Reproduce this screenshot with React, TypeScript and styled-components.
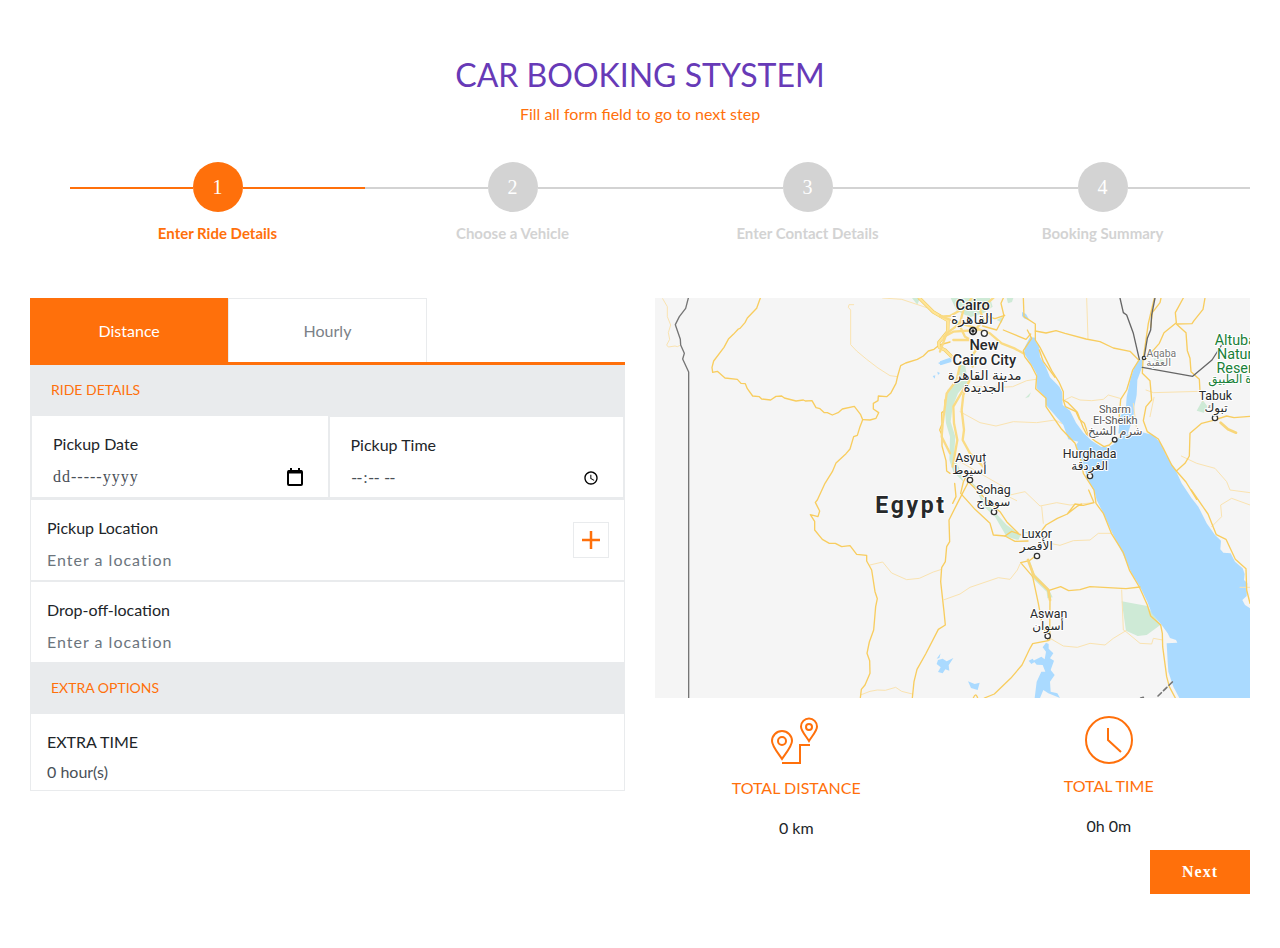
import React, { useState } from "react";
import styled, { createGlobalStyle } from "styled-components";

const orange = "#ff700b";
const rule = "#e9ebed";
const sans = `Lato, "Liberation Sans", sans-serif`;
const serif = `"Liberation Serif", "Times New Roman", serif`;

const GlobalStyle = createGlobalStyle`
  *, *::before, *::after { box-sizing: border-box; }
  body { margin: 0; background: #fff; color: #212529; font: 16px/24px ${sans}; }
  h1, h2, h3, p, ol, dl, dd, dt { margin: 0; padding: 0; }
`;

const Page = styled.main`
  padding: 55px 30px;
`;

const Header = styled.header`
  text-align: center;
  color: ${orange};
`;

const Title = styled.h1`
  color: #673ab7;
  font-size: 32px;
  line-height: 40px;
  font-weight: 400;
  margin-bottom: 7px;
`;

const Steps = styled.ol`
  display: grid;
  grid-template-columns: repeat(4, 1fr);
  list-style: none;
  margin: 36px 0 53px 40px;
`;

const Step = styled.li<{ $active?: boolean }>`
  text-align: center;
  color: ${(p) => (p.$active ? orange : "#d3d3d3")};
`;

const Track = styled.div`
  display: flex;
  align-items: center;
  margin-bottom: 9px;
`;

const Line = styled.span`
  flex: 1;
  height: 2px;
  margin-top: 2px;
  background: currentColor;
`;

const Circle = styled.span<{ $active?: boolean }>`
  width: 50px;
  height: 50px;
  border-radius: 50%;
  background: ${(p) => (p.$active ? orange : "#d3d3d3")};
  color: #fff;
  font: 20px/50px ${serif};
`;

const StepName = styled.span`
  display: block;
  font-size: 15px;
  font-weight: 700;
`;

const Columns = styled.div`
  display: grid;
  grid-template-columns: 1fr 1fr;
  gap: 30px;
  align-items: start;
`;

const Tabs = styled.div`
  display: grid;
  grid-template-columns: repeat(3, 1fr);
  height: 67px;
  border-bottom: 3px solid ${orange};
`;

const Tab = styled.button<{ $active?: boolean }>`
  border: 1px solid ${(p) => (p.$active ? orange : rule)};
  border-bottom: 0;
  background: ${(p) => (p.$active ? orange : "#fff")};
  color: ${(p) => (p.$active ? "#fff" : "#7b8187")};
  font: 16px/24px ${sans};
  padding: 0;
`;

const SectionTitle = styled.h2`
  height: 50px;
  padding: 0 21px;
  background: ${rule};
  color: ${orange};
  font-size: 14px;
  line-height: 50px;
  font-weight: 400;
`;

const DateRow = styled.div`
  display: grid;
  grid-template-columns: 1fr 1fr;
  border: solid ${rule};
  border-width: 1px 2px 3px;
`;

const DateCell = styled.div<{ $divided?: boolean }>`
  height: 81px;
  padding: 16px ${(p) => (p.$divided ? "20px" : "24px")} 8px 21px;
  border: 0 solid ${rule};
  border-width: ${(p) => (p.$divided ? "1px 0 0 2px" : "0")};
`;

const Label = styled.label`
  display: block;
`;

const DateControl = styled.div`
  display: flex;
  align-items: center;
  margin-top: 9px;
`;

const DateInput = styled.input`
  flex: 1;
  min-width: 0;
  width: 100%;
  height: 24px;
  padding: 0;
  border: 0;
  outline: 0;
  background: none;
  color: #495057;
  font: 16px/24px ${serif};
  letter-spacing: 1px;
  &::placeholder { color: #495057; opacity: 1; }
`;

const IconButton = styled.button`
  display: flex;
  padding: 0;
  border: 0;
  background: none;
  color: #000;
`;

const Field = styled.div<{ $last?: boolean }>`
  display: flex;
  align-items: center;
  padding: 16px 15px 8px 16px;
  border: 1px solid ${rule};
  border-top-width: 0;
  border-bottom-width: ${(p) => (p.$last ? "1px" : "2px")};
`;

const FieldBody = styled.div<{ $gap: number }>`
  flex: 1;
  display: flex;
  flex-direction: column;
  gap: ${(p) => p.$gap}px;
`;

const LocationInput = styled.input`
  height: 24px;
  padding: 0;
  border: 0;
  outline: 0;
  background: none;
  color: #495057;
  font: 16px/24px ${sans};
  letter-spacing: 1px;
  &::placeholder { color: #6c757d; opacity: 1; }
`;

const HoursInput = styled(LocationInput)`
  letter-spacing: normal;
`;

const AddButton = styled.button`
  width: 36px;
  height: 36px;
  margin-top: -8px;
  display: grid;
  place-items: center;
  padding: 0;
  border: 1px solid ${rule};
  background: #fff;
  color: ${orange};
`;

const ExtraField = styled(Field)`
  border-top-width: 1px;
  padding-bottom: 6px;
`;

const MapView = styled.svg`
  display: block;
  width: 100%;
  height: 400px;
  background: #f5f5f5;
`;

const Totals = styled.dl`
  display: grid;
  grid-template-columns: 1fr 1fr;
  gap: 30px;
  align-items: start;
  padding-top: 18px;
  text-align: center;
`;

const Total = styled.div`
  display: flex;
  flex-direction: column;
  align-items: center;
  svg { margin-bottom: 10px; color: ${orange}; }
  dt { color: ${orange}; margin-bottom: 16px; }
`;

const NextButton = styled.button`
  display: block;
  width: 100px;
  height: 44px;
  margin: 10px 0 0 auto;
  border: 0;
  background: ${orange};
  color: #fff;
  font: bold 16px/24px ${serif};
  letter-spacing: 1px;
`;

const steps = ["Enter Ride Details", "Choose a Vehicle", "Enter Contact Details", "Booking Summary"];

const water = "#aadaff";
const park = "#ceead6";

type Place = { x: number; y: number; text: string; size: number; weight?: number; fill?: string; spacing?: number };

const labels: Place[] = [
  { x: 98, y: 61, text: "Cairo", size: 44, weight: 500 },
  { x: 96, y: 103, text: "القاهرة", size: 42 },
  { x: 132, y: 180, text: "New", size: 44, weight: 500 },
  { x: 133, y: 226, text: "Cairo City", size: 44, weight: 500 },
  { x: 134, y: 269, text: "مدينة القاهرة", size: 41 },
  { x: 132, y: 307, text: "الجديدة", size: 40 },
  { x: 664, y: 200, text: "Aqaba", size: 31, fill: "#777" },
  { x: 656, y: 229, text: "العقبة", size: 31, fill: "#777" },
  { x: 886, y: 164, text: "Altuba", size: 43, fill: "#188038" },
  { x: 884, y: 206, text: "Natur", size: 43, fill: "#188038" },
  { x: 884, y: 248, text: "Reser", size: 43, fill: "#188038" },
  { x: 870, y: 280, text: "ة الطبيق", size: 36, fill: "#188038" },
  { x: 826, y: 331, text: "Tabuk", size: 37 },
  { x: 828, y: 366, text: "تبوك", size: 36 },
  { x: 525, y: 369, text: "Sharm", size: 33, fill: "#555" },
  { x: 526, y: 402, text: "El-Sheikh", size: 33, fill: "#555" },
  { x: 526, y: 436, text: "شرم الشيخ", size: 35, fill: "#555" },
  { x: 449, y: 505, text: "Hurghada", size: 37 },
  { x: 449, y: 540, text: "الغردقة", size: 36 },
  { x: 92, y: 517, text: "Asyut", size: 37 },
  { x: 88, y: 552, text: "أسيوط", size: 36 },
  { x: 160, y: 613, text: "Sohag", size: 37 },
  { x: 160, y: 649, text: "سوهاج", size: 36 },
  { x: 290, y: 745, text: "Luxor", size: 37 },
  { x: 289, y: 780, text: "الأقصر", size: 36 },
  { x: 326, y: 985, text: "Aswan", size: 37 },
  { x: 324, y: 1020, text: "أسوان", size: 36 },
  { x: -87, y: 670, text: "Egypt", size: 69, weight: 700, spacing: 8 },
];

const dots = [
  [133, 130, 9], [612, 204, 5], [825, 384, 8], [524, 449, 7], [450, 558, 8],
  [90, 570, 8], [162, 666, 8], [291, 798, 8], [323, 1038, 8],
];

const westRoads = [
  "M331 24L320 55 292 84 285 98 270 115 265 117 250 133 236 146 222 172 191 213 186 232 188 247 202 244 225 264 262 268 273 280 286 281 292 296 308 318 328 320 335 327 362 330 378 319 395 318 403 324 438 333 460 330 466 333 486 332 498 353 510 356 523 368 532 368 547 375 566 367 577 357 613 349 632 374 638 389 630 410 622 436 611 440 600 477 588 491 558 519 547 545 525 580 502 630 496 637 509 663 504 680 481 674 494 694V720L517 748 538 760 556 760 575 770 600 767 620 793 650 796V813L665 840 675 905 682 926 677 950 671 1020 658 1056 651 1090 659 1112 660 1150 645 1185 634 1198 631 1224",
  "M638 389L660 390 678 385 686 368 670 357V340L684 332 685 318 710 320 722 310 738 280 743 258 752 227 767 219 802 208 820 198 835 183 852 178 868 165 900 156",
  "M900 305L885 330 884 362 875 368 876 402 869 420 876 435V468L888 512 890 543 900 550",
  "M955 576L922 640 897 690 899 755 890 770 886 815 875 833 872 875 882 965 886 1005 865 1018 827 1092 801 1138 792 1175 787 1224",
];

const westTracks = [
  "M38 26L52 50V80L62 105 55 128 59 148 50 165 55 171 75 168 82 170 90 166",
  "M611 44H597L595 52 602 60V164L620 183 650 208 684 234 720 257 743 260",
  "M660 825L698 816 725 849 770 869 808 865 850 846 875 838",
  "M634 1214L660 1204 682 1200 706 1201 737 1192 755 1204 787 1212",
  "M698 24L755 28 830 53",
];

const eastRoads = [
  "M250 24L252 80 286 102 286 150 300 172 335 242 357 276 370 305V330L384 338 412 367 430 414 440 433 468 455 492 470 508 465 520 452",
  "M298 180L310 215 345 262M370 330L376 350 408 365 418 388 433 400 444 432",
  "M286 123L318 129 348 122 375 130 438 147 480 155 520 174 570 184 596 210",
  "M262 120L275 145 250 182 254 200 273 225 290 258 287 296 318 325V350L340 382 365 418 405 460 425 518 430 550 462 600 468 640 490 670 514 730 550 788 569 842 598 891 622 945 632 978 662 1005 667 1030 668 1070 680 1160 688 1190 706 1224",
  "M643 24L625 100 615 170 609 208M609 210L607 250 630 272 635 330 618 350 610 392 622 425 655 447 670 475 695 525 709 543 738 576 770 628M709 543L735 520 748 498 750 430 785 400 817 392 860 378 882 383 930 379",
  "M663 24L660 38 637 68 632 112M730 24L706 68 709 98 672 128 658 160 618 206",
  "M795 24L789 58 762 92 756 101 709 102 738 128 742 182 750 205 753 245 778 268 780 304",
  "M598 208L578 240 560 300 542 328 536 400",
  "M754 600L804 672 829 734 858 748 886 808 918 836 920 900 930 940",
  "M128 108L170 120 192 78 183 40 190 24M137 78L165 86 194 76M190 120L258 148 272 132",
  "M44 580L48 620 38 640",
  "M85 545L70 576 62 610 105 658 150 700 160 735 195 738 225 754 264 753",
  "M85 575L110 600 150 640 180 665 200 695 235 730M195 738L215 724 245 735",
  "M305 722L318 705 352 685 382 672 405 642 430 646 462 638 446 600M382 672L410 650 424 642",
  "M264 810L282 858 325 900 330 930 329 1050M325 902L362 890 386 902 420 899 450 890 558 896 600 891",
  "M242 818L268 812 290 795M242 818L278 860 295 940 306 1000 325 1052 278 1061 270 1075 246 1125 212 1165 163 1212 133 1224",
  "M100 1224Q107 1205 113 1224",
];

const eastTracks = [
  "M372 331L395 320 420 330 455 332 490 328 505 315 540 325",
  "M60 365L120 398 168 408 220 395 290 398 345 390 365 400",
  "M100 290L180 292 218 290 260 272 288 268",
  "M440 24L444 145M618 300L640 308 780 304 788 334",
  "M60 515L120 550 190 590 186 610 230 632",
  "M210 615L255 605 300 648 350 638 390 645 460 638M305 650L310 700",
  "M330 760L360 766 400 752 450 750 475 730 515 730",
  "M10 930L60 912 90 892 175 863 210 868 232 840 240 822",
  "M545 900L550 1020 558 1025 600 1060 635 1062 640 1045 668 1050",
  "M330 1045L370 1068 412 1072 450 1060 495 1065 520 1045 558 1022",
  "M724 498L770 520 825 535 860 575 870 600 930 608",
  "M815 710L845 680 842 645 875 625 930 645",
  "M642 322L630 380M900 892H930M590 420L580 340",
];

const highways = [
  "M95 24L70 60 60 100 20 130 0 185M0 78L55 98 100 112 150 130 185 160 225 176 250 190",
  "M62 60L30 78 0 80M55 98L75 140 92 150 108 180 95 200 98 230M160 24L120 60 130 90 110 115",
  "M40 150L90 150M12 140L40 125 112 120M60 225L50 270 20 310 8 400 5 440 30 490",
  "M95 255L70 315 65 360 72 420 68 450 90 490 130 530",
  "M75 290L40 350 42 400 52 450 38 530",
];

const desertHighway = "M808 24L850 66 894 92 893 125 866 158 868 172 885 180 905 200";

function EgyptMap() {
  return (
    <MapView viewBox="0 0 1785 1200" preserveAspectRatio="xMidYMid slice" role="img" aria-label="Map of Egypt">
      <g fill="none" strokeLinejoin="round" strokeLinecap="round">
        <g transform="translate(-15 -24)">
          <path d="M786 24h24l-8 20z" fill={park} />
          <path d="M864 219l20-9 20-4v10l-30 9zM848 258l8-2-2 10zM862 245l8 4-6 6z" fill={water} />
          {westTracks.map((d) => <path key={d} d={d} stroke="#fae3b0" strokeWidth="3" />)}
          {westRoads.map((d) => <path key={d} d={d} stroke="#f8cd5f" strokeWidth="4" />)}
          <path d={desertHighway} stroke="#f0ca62" strokeWidth="10" />
          <path d={desertHighway} stroke="#ffe596" strokeWidth="7" />
          <path d="M115 24L107 55 88 80 76 104 91 148 92 165 103 190 98 207 116 246V1224" stroke="#757575" strokeWidth="4" />
        </g>
        <g transform="translate(855 -24)">
          <g fill={park}>
            <path d="M32 24H150L158 50 130 70 90 82 50 62zM170 90l18-10-2 18zM200 24h20l-4 12-12 4z" />
            <path d="M58 225L50 275 22 300 14 350 18 400 30 440 28 510 40 545 70 575 60 540 42 500 46 440 32 395 38 350 54 310 84 275 75 225z" />
            <path d="M88 570L112 605 132 650 165 680 200 740 235 750 242 735 200 705 170 672 130 628 110 590z" />
            <path d="M270 812L275 862 320 905 322 925 338 922 325 895 282 850zM250 728l40-8v15z" />
            <path d="M545 934L622 948 662 1004 620 1035 593 1038 558 1022z" />
            <path d="M770 362l18-32 15 20-12 18zM640 205l30 5 10 20-30-8zM255 325l18-18-6 14z" />
          </g>
          <g fill={water}>
            <path d="M270 141L286 143 288 155 297 170 300 200 318 232 330 262 358 290 366 305 368 345 390 362 408 398 430 428 455 452 483 470 505 472 522 462 538 440 600 425 640 435 662 460 678 495 700 530 708 543 725 580 755 625 775 650 800 700 825 735 843 752 841 778 850 788 872 790 885 815 908 835 914 852 912 870 922 880 920 918 907 930 915 945 930 955V1224H718L700 1190 685 1145 683 1115 680 1060 712 1058 708 1050 690 1044 683 1030 665 1005 635 970 622 935 600 890 575 850 550 795 515 725 490 670 470 630 465 610 445 570 435 540 415 490 408 465 415 455 385 448 370 405 340 370 318 345 315 320 290 295 289 250 275 225 252 190 255 170z" />
            <path d="M597 208L608 210 605 235 592 270 590 315 583 350 580 385 572 405 560 440 535 430 540 380 558 350 560 320 572 265 582 235z" />
            <path d="M246 66l12 6 10 18-14-4-8-8zM0 214l34-12-8 12-26 12z" />
            <path d="M84 1174l20 8 15-4-6 22-20-6z" />
            <path d="M-10 1106l12-16-4 14zM-6 1110l14-4 12 8 20-10-14 22 2 16-12-4-8 12-14-4 8-14-12-10z" />
            <path d="M318 1058L326 1062 326 1076 340 1090 330 1105 342 1112 332 1140 344 1155 330 1175 332 1205 352 1210 360 1224 325 1210 310 1200 300 1224H284L290 1175 304 1145 316 1145 308 1125 290 1124 280 1112 304 1100 314 1108 318 1085 308 1072zM266 1112l12-6 6 10-10 6z" />
          </g>
          {eastTracks.map((d) => <path key={d} d={d} stroke="#fae3b0" strokeWidth="3" />)}
          {highways.map((d) => <path key={d} d={d} stroke="#fadb84" strokeWidth="7" />)}
          {eastRoads.map((d) => <path key={d} d={d} stroke="#f8cd5f" strokeWidth="4" />)}
          <path d="M264 810L282 858 325 900 330 930M842 398l22 20 24 10" stroke="#f8d67a" strokeWidth="8" />
          <path d="M540 24L550 68 560 75 580 130 598 208M645 24L635 75 632 120 622 145 612 205M607 232L758 259 816 210 845 165M918 160L930 158" stroke="#666" strokeWidth="4" />
          <path d="M697 1176L650 1222M610 1222l-8 2" stroke="#757575" strokeWidth="5" strokeDasharray="14 9" />
          {dots.map(([x, y, r]) => <circle key={x} cx={x} cy={y} r={r} fill="#fff" stroke="#333" strokeWidth="4" />)}
          <circle cx="99" cy="123" r="10" fill="#fff" stroke="#222" strokeWidth="5" />
          <circle cx="99" cy="123" r="5" fill="#222" />
          {labels.map((l) => (
            <text
              key={l.y + l.text}
              x={l.x}
              y={l.y}
              textAnchor="middle"
              fontFamily={'Roboto, "DejaVu Sans", sans-serif'}
              fontSize={l.size}
              fontWeight={l.weight ?? 400}
              letterSpacing={l.spacing}
              fill={l.fill ?? "#27292b"}
              stroke="#fff"
              strokeWidth="6"
              paintOrder="stroke"
            >
              {l.text}
            </text>
          ))}
        </g>
      </g>
    </MapView>
  );
}

export default function App() {
  const [tab, setTab] = useState("Distance");
  return (
    <Page>
      <GlobalStyle />
      <Header>
        <Title>CAR BOOKING STYSTEM</Title>
        <p>Fill all form field to go to next step</p>
      </Header>
      <Steps>
        {steps.map((name, i) => (
          <Step key={name} $active={i === 0}>
            <Track>
              <Line />
              <Circle $active={i === 0}>{i + 1}</Circle>
              <Line />
            </Track>
            <StepName>{name}</StepName>
          </Step>
        ))}
      </Steps>
      <Columns>
        <form>
          <Tabs role="tablist">
            {["Distance", "Hourly"].map((t) => (
              <Tab key={t} type="button" role="tab" aria-selected={t === tab} $active={t === tab} onClick={() => setTab(t)}>
                {t}
              </Tab>
            ))}
          </Tabs>
          <SectionTitle>RIDE DETAILS</SectionTitle>
          <DateRow>
            <DateCell>
              <Label htmlFor="date">Pickup Date</Label>
              <DateControl>
                <DateInput id="date" placeholder="dd-----yyyy" />
                <IconButton type="button" aria-label="Open calendar">
                  <svg width="18" height="20" viewBox="0 0 18 20" fill="none" stroke="currentColor" strokeWidth="2">
                    <rect x="2" y="4" width="14" height="14" rx="1" />
                    <path d="M2 5h14" strokeWidth="3" />
                    <path d="M5 1v3M13 1v3" />
                  </svg>
                </IconButton>
              </DateControl>
            </DateCell>
            <DateCell $divided>
              <Label htmlFor="time">Pickup Time</Label>
              <DateControl>
                <DateInput id="time" type="time" />
              </DateControl>
            </DateCell>
          </DateRow>
          <Field>
            <FieldBody $gap={8}>
              <Label htmlFor="pickup">Pickup Location</Label>
              <LocationInput id="pickup" placeholder="Enter a location" />
            </FieldBody>
            <AddButton type="button" aria-label="Add a stop">
              <svg width="18" height="18" viewBox="0 0 18 18" stroke="currentColor" strokeWidth="2.5">
                <path d="M9 0v18M0 9h18" />
              </svg>
            </AddButton>
          </Field>
          <Field $last>
            <FieldBody $gap={8}>
              <Label htmlFor="dropoff">Drop-off-location</Label>
              <LocationInput id="dropoff" placeholder="Enter a location" />
            </FieldBody>
          </Field>
          <SectionTitle>EXTRA OPTIONS</SectionTitle>
          <ExtraField $last>
            <FieldBody $gap={6}>
              <Label htmlFor="extra">EXTRA TIME</Label>
              <HoursInput id="extra" defaultValue="0 hour(s)" />
            </FieldBody>
          </ExtraField>
        </form>
        <section>
          <EgyptMap />
          <Totals>
            <Total>
              <svg width="50" height="50" viewBox="0 0 50 50" fill="none" stroke="currentColor" strokeWidth="2">
                <path d="M11 43C7 37 1 30 1 25a10 10 0 0 1 20 0c0 5-6 12-10 18z" />
                <circle cx="11" cy="25" r="4" />
                <path d="M38 25c-3-5-8-10-8-14.500a8 8 0 0 1 16 0C46 15 41 20 38 25z" />
                <circle cx="38" cy="11" r="3" />
                <path d="M11 47h18V29h10" />
              </svg>
              <dt>TOTAL DISTANCE</dt>
              <dd>0 km</dd>
            </Total>
            <Total>
              <svg width="48" height="48" viewBox="0 0 48 48" fill="none" stroke="currentColor" strokeWidth="2">
                <circle cx="24" cy="24" r="23" />
                <path d="M23 12v12l13 12" />
              </svg>
              <dt>TOTAL TIME</dt>
              <dd>0h 0m</dd>
            </Total>
          </Totals>
          <NextButton type="button">Next</NextButton>
        </section>
      </Columns>
    </Page>
  );
}
